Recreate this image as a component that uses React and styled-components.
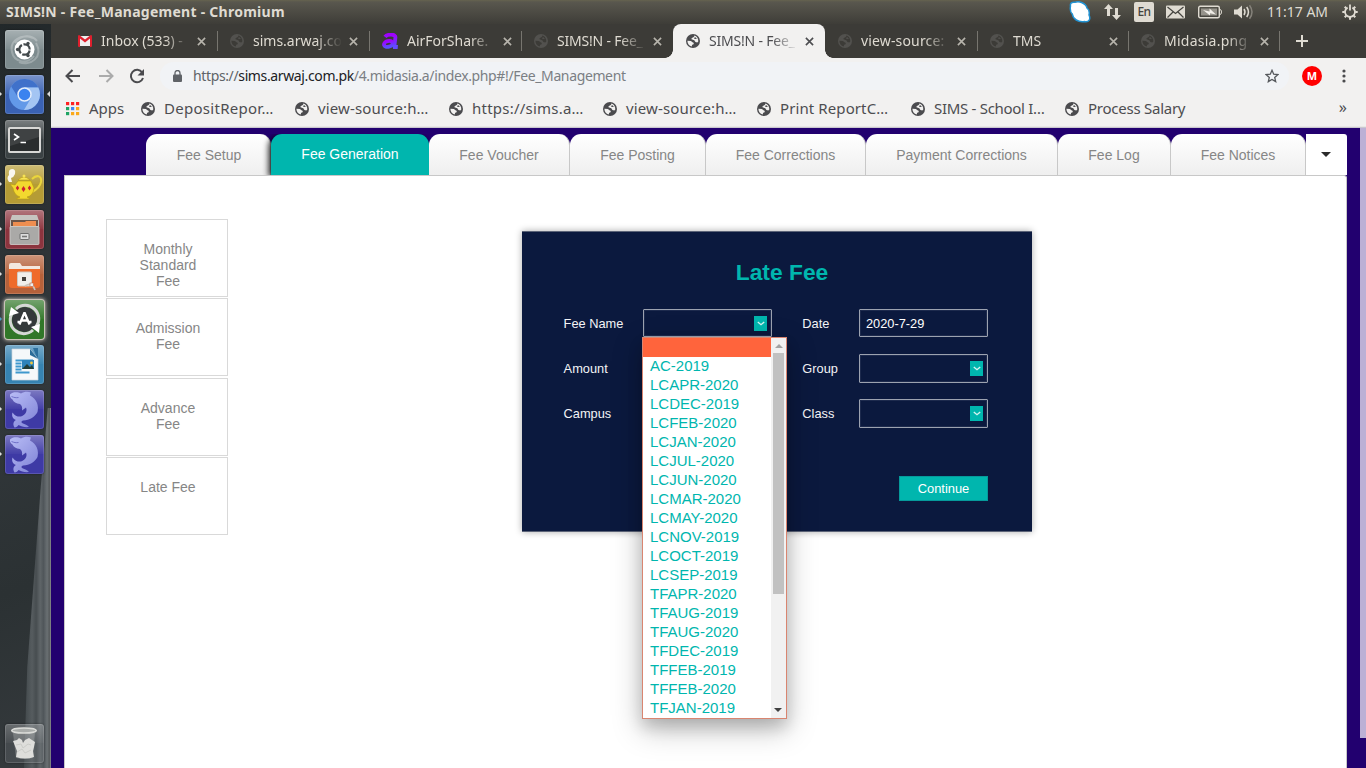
import React from "react";
import styled, { createGlobalStyle, css } from "styled-components";

const TEAL = "#00b6ae";

const GlobalStyle = createGlobalStyle`
  *, *::before, *::after { box-sizing: border-box; }
  html, body { margin: 0; padding: 0; overflow: hidden; }
  body { width: 1366px; height: 768px; font-family: "Liberation Sans", Arial, sans-serif; }
  svg { display: block; flex: none; }
`;

const uiFont = css`font-family: "Noto Sans", "Open Sans", sans-serif;`;

const Screen = styled.div`
  width: 1366px; height: 768px; overflow: hidden;
  display: flex; flex-direction: column;
`;
const TopBar = styled.header`
  ${uiFont}
  height: 24px; flex: none; display: flex; align-items: center; padding: 0 8px 0 6px;
  background: linear-gradient(#66634f 0, #59574e 2px, #3e3d38 100%);
  color: #dfdbd2;
`;
const WindowTitle = styled.div`
  font-size: 14px; font-weight: 700; letter-spacing: 0.26px; flex: 1; white-space: nowrap; padding-bottom: 1px;
`;
const Tray = styled.div`display: flex; align-items: center; height: 24px;`;
const TraySlot = styled.div`margin-right: ${(p) => p.$gap}px;`;
const Lang = styled.div`
  width: 20px; height: 20px; border-radius: 2px; background: #dfdbd2; color: #45443f;
  font-size: 12px; font-weight: 500; line-height: 20px; text-align: center; margin-right: 12px; letter-spacing: -0.5px;
`;
const Clock = styled.div`
  font-size: 14px; letter-spacing: 0; margin-right: 12px; width: 63px; white-space: nowrap; line-height: 24px;
`;
const Desktop = styled.div`display: flex; height: 744px;`;

const Launcher = styled.nav`
  width: 51px; flex: none; display: flex; flex-direction: column; align-items: center;
  padding: 5.5px 2px 5.5px 0; gap: 6px; position: relative;
  background: linear-gradient(160deg, #22282a 0, #33393c 45%, #2b3133 75%, #353a3d 100%);
  &::before {
    content: ""; position: absolute; right: 0; bottom: 0; width: 27px; height: 360px;
    clip-path: polygon(88% 0, 100% 0, 100% 100%, 0 100%, 12% 72%, 62% 22%);
    background: linear-gradient(90deg, #40474a, #565c5f 30%, #474d50 45%, #5f6568 60%, #50565a 72%, #6a7073 86%, #55595b 94%, #8b8f91 100%);
  }
`;
const Tile = styled.div`
  width: 39px; height: 39px; border-radius: 3px; position: relative; flex: none;
  margin-top: ${(p) => (p.$last ? "auto" : 0)};
  background: ${(p) => p.$bg};
  box-shadow: ${(p) => (p.$glow ? "0 0 0 1px #c9c3b8, 0 0 4px 1px #e7ded0" : "inset 0 0 0 1px rgba(255,255,255,.14), 0 0 2px rgba(0,0,0,.5)")};
  &::before {
    content: ""; position: absolute; inset: 0 0 50% 0; border-radius: 3px 3px 0 0;
    background: linear-gradient(rgba(255,255,255,${(p) => (p.$last ? 0.2 : 0.32)}), rgba(255,255,255,.03));
  }
  svg { position: relative; }
`;
const Arrow = styled.i`
  position: absolute; top: 16px; ${(p) => (p.$right ? "right: -6px" : "left: -6px")};
  border: 3.5px solid transparent; border-width: 3.5px 3px;
  ${(p) => (p.$right ? "border-right-color: #ddd; border-left: 0;" : `border-left-color: ${p.$color || "#ddd"}; border-right: 0;`)}
`;

const Browser = styled.main`flex: 1; display: flex; flex-direction: column; min-width: 0;`;
const TabStrip = styled.div`
  ${uiFont}
  height: 34px; flex: none; display: flex; background: #3c3b37; padding-left: 14px;
`;
const BrowserTab = styled.div`
  width: ${(p) => p.$w}px; height: 34px; flex: none; display: flex; align-items: center; padding-left: 13px;
  position: relative; color: ${(p) => (p.$active ? "#4d4d50" : "#dfdbd2")};
  border-radius: 8px 8px 0 0;
  background: ${(p) => (p.$active ? "#f2f1f0" : "transparent")};
  &::after {
    content: ""; display: ${(p) => (p.$line ? "block" : "none")}; width: 1px; height: 20px; background: #77756f;
    position: absolute; right: -1px; top: 7px;
  }
  ${(p) => p.$active && css`
    &::before {
      content: ""; position: absolute; left: -8px; right: -8px; bottom: 0; height: 8px;
      background:
        radial-gradient(circle at 0 0, transparent 7.5px, #f2f1f0 8px) 0 0 / 8px 8px no-repeat,
        radial-gradient(circle at 100% 0, transparent 7.5px, #f2f1f0 8px) 100% 0 / 8px 8px no-repeat;
    }
  `}
`;
const TabLabel = styled.span`
  margin-left: 9px; width: 89px; white-space: nowrap; font-size: 14px; line-height: 24px;
  letter-spacing: ${(p) => p.$ls || 0}px;
  mask-image: linear-gradient(90deg, #000 63px, transparent 89px);
`;
const CloseSlot = styled.span`margin-left: 7px;`;
const PlusSlot = styled.span`margin: 11px 0 0 17px;`;

const Toolbar = styled.div`
  ${uiFont}
  height: 36px; flex: none; display: flex; align-items: center; background: #f2f1f0; padding: 0 15px 0 14px;
`;
const NavIcon = styled.span`margin-right: ${(p) => p.$gap}px;`;
const AddressBar = styled.div`
  height: 28px; width: 1129px; flex: none; border-radius: 14px; background: #f1f3f6; margin-left: 9px;
  display: flex; align-items: center; padding: 0 10px 0 13px; color: #7b7f84; margin-right: 13px;
`;
const Url = styled.span`
  margin-left: 11px; flex: 1; font-size: 14px; letter-spacing: -0.37px; white-space: nowrap; padding-bottom: 2px;
  b { font-weight: 400; color: #202124; }
  i { font-style: normal; color: #5f6368; }
`;
const Avatar = styled.div`
  width: 20px; height: 20px; flex: none; border-radius: 50%; background: #f00; color: #fff;
  font: 700 11px/20px "Noto Sans", sans-serif; text-align: center; margin-right: 20px;
`;
const Bookmarks = styled.div`
  ${uiFont}
  height: 34px; flex: none; background: #f2f1f0; border-bottom: 1px solid #c9c7cf; box-shadow: 0 -1px 0 #e8e6e6 inset;
  display: flex; align-items: center; padding: 0 19px 4px 15px; color: #4d4d50; font-size: 15px;
`;
const Bookmark = styled.div`
  display: flex; align-items: center; width: ${(p) => p.$w}px; flex: none; white-space: nowrap;
  letter-spacing: ${(p) => p.$ls || 0}px; line-height: 22px;
  span { margin-left: 9px; padding-bottom: 2px; }
`;
const More = styled.div`margin-left: auto; font-size: 16px; line-height: 20px; padding-bottom: 3px;`;

const Page = styled.section`
  flex: 1; display: flex; justify-content: space-between; background: #22006f; min-height: 0; padding-left: 13px;
`;
const PageColumn = styled.div`width: 1283px; display: flex; flex-direction: column; padding-top: 6px;`;
const PageScroll = styled.div`width: 6px; height: 610px; background: #bcb0d5;`;

const FeeTabs = styled.div`display: flex; height: 41px; flex: none; padding-left: 82px;`;
const FeeTab = styled.div`
  width: ${(p) => p.$w}px; flex: none; height: 41px; border-radius: 11px 11px 0 0; text-align: center;
  border-right: 1px solid #c8c8c8; font-size: 14px; line-height: 42px; color: #868686; white-space: nowrap;
  background: linear-gradient(#fff, #efefef);
  &:first-child { padding-left: 2px; }
  ${(p) => p.$active && css`
    background: ${TEAL}; color: #fff; line-height: 40px; border-right: 0; position: relative;
    box-shadow: -2px 2px 6px rgba(0, 0, 0, 0.95);
    clip-path: inset(0 0 0 -10px);
  `}
`;
const MoreTabs = styled.div`
  width: 41px; background: #fff; border-radius: 0 3px 0 0; display: flex; align-items: center; justify-content: center;
  padding-right: 1px;
`;
const Caret = styled.i`border: 5px solid transparent; border-top-color: #2b2b2b; border-bottom: 0;`;
const Content = styled.div`
  flex: 1; background: #fff; border: 1px solid #c8c8c8; border-bottom: 0; border-radius: 0 3px 0 0;
  display: flex; align-items: flex-start; padding: 43px 0 0 41px;
`;
const SideMenu = styled.div`width: 122px; display: flex; flex-direction: column; gap: 1.4px;`;
const SideItem = styled.div`
  height: 78px; border: 1px solid #d9d9d9; padding: 21px 20px 0 22px; text-align: center;
  font-size: 14px; line-height: 16px; color: #868686;
`;

const Card = styled.div`
  width: 510px; height: 300.5px; margin: 12px 0 0 294px; background: #0b193e; padding: 27px 44px 0 41px;
  border-top: 1px solid #5c6478; border-bottom: 1px solid #5c6478;
  box-shadow: 0 0 7px rgba(0, 0, 0, 0.33);
`;
const CardTitle = styled.h1`
  margin: 0 0 23px 13px; font-size: 22.8px; line-height: 27px; text-align: center; color: ${TEAL};
`;
const FieldGrid = styled.div`
  display: grid; grid-template-columns: 80px 129px 30px 57px 129px; grid-auto-rows: 28px; row-gap: 17px; align-items: center;
`;
const Label = styled.label`
  font-size: 12.8px; color: #f3f4f6; grid-column: ${(p) => p.$col}; white-space: nowrap;
  padding-left: ${(p) => (p.$col === 1 ? 0.6 : 0.3)}px;
`;
const Field = styled.div`
  grid-column: ${(p) => p.$col}; height: ${(p) => (p.$tall ? 29 : 28)}px; border: 1px solid #9ca2b0; border-radius: 1px;
  margin-bottom: ${(p) => (p.$tall ? -1 : 0)}px;
  box-shadow: inset 0 0 0 1px rgba(156, 162, 176, 0.13);
  display: flex; align-items: center; justify-content: ${(p) => (p.$select ? "flex-end" : "flex-start")};
  padding: 0 4px 0 6px; color: #fff; font-size: 12.8px; position: relative;
`;
const Chevron = styled.span`
  width: 13px; height: 15px; background: ${TEAL}; display: flex; align-items: center; justify-content: center;
`;
const Continue = styled.button`
  display: block; margin: 49px 0 0 auto; width: 89px; height: 25px; border: 1px solid #069a9b; background: ${TEAL};
  color: #fff; font: 12.9px "Liberation Sans", sans-serif; padding: 0;
`;
const Dropdown = styled.div`
  position: absolute; z-index: 5; left: -2px; top: 27px; width: 145px; height: 382px; background: #fff;
  border: 1px solid #d98570; display: flex;
  box-shadow: 0 10px 28px rgba(0, 0, 0, 0.26), 0 8px 14px rgba(0, 0, 0, 0.14);
`;
const Options = styled.div`flex: 1;`;
const Option = styled.div`
  height: 19px; padding-left: 7px; font-size: 15px; line-height: 18px; color: ${TEAL}; white-space: nowrap;
  background: ${(p) => (p.$selected ? "#ff643c" : "transparent")};
`;
const ListScroll = styled.div`
  width: 15px; background: #f1f1f1; display: flex; flex-direction: column; align-items: center; padding: 6px 0 6px;
`;
const ListThumb = styled.div`width: 11px; height: 241px; background: #c1c1c1; margin: 5px 0 auto; flex: none;`;
const ScrollArrow = styled.i`
  border: 4px solid transparent; height: 0; margin-right: ${(p) => (p.$up ? 0 : 1)}px;
  ${(p) => (p.$up ? "border-bottom-color: #a3a3a3; border-top: 0;" : "border-top-color: #404040; border-bottom: 0;")}
`;

const Globe = ({ dim, light = "#f2f1f0" }) => (
  <svg width="14" height="14" viewBox="0 0 14 14">
    <circle cx="7" cy="7" r="7" fill={dim ? "#52514e" : "#4b4b4e"} />
    <path d="M8.3 1.4C8.5 3 7.2 3.2 6.3 3.7C5.3 4.3 5 5 6.1 5.5L8.3 6.2L9.4 8.1L11.3 8.6L12.3 7.5C12.5 4.5 11 2.2 8.3 1.4Z M1.4 6.8L4.9 7L6.5 8.2L7.9 9L7.3 10.4L6.1 10.8L5.8 12.5C3 11.9 1.4 9.7 1.4 6.8Z" fill={dim ? "#3c3b37" : light} />
    <path d="M9 3.1L11 4.7L9 5.1L8 4.5Z" fill={dim ? "#52514e" : "#4b4b4e"} />
  </svg>
);
const Gmail = () => (
  <svg width="14" height="12" viewBox="0 0 14 12">
    <path d="M1 1h12v10H1z" fill="#eee" />
    <path d="M0 1.2Q0 0 1.2 0L7 4.5 12.8 0Q14 0 14 1.2V11q0 1-1 1h-1V3.6L7 7.4 2 3.6V12H1q-1 0-1-1z" fill="#df1f2d" />
  </svg>
);
const AirLogo = () => (
  <svg width="16" height="16" viewBox="0 0 16 16">
    <defs><linearGradient id="air" x2="0" y2="1"><stop stopColor="#a100ff" /><stop offset="1" stopColor="#5b4dff" /></linearGradient></defs>
    <g fill="none" stroke="url(#air)">
      <path d="M3 3.800C5 1 14 .6 13.400 4.500L12.200 14.500" strokeWidth="3.800" />
      <ellipse cx="6.300" cy="10.900" rx="4.400" ry="2.900" strokeWidth="3.800" transform="rotate(-14 6.300 10.900)" />
    </g>
    <path d="M11 12h5l-.4 4H11z" fill="#654aff" />
  </svg>
);
const Close = ({ color = "#b7b4ac" }) => (
  <svg width="9" height="9" viewBox="0 0 9 9"><path d="M.9.9l7.2 7.2M8.1.9L.9 8.1" stroke={color} strokeWidth="1.6" /></svg>
);

const TrayIcons = () => (
  <Tray>
    <TraySlot $gap={13}>
      <svg width="22" height="22" viewBox="0 0 22 22">
        <path d="M1.500 5C.8 2 3 .8 6 1.300C10-.2 17 2 18 7C20.500 9 20.500 12 20 14C22 18 20 21.500 15.500 20.500C9 21.500 4 18 3.300 13C1 11 1 8 1.500 5Z" fill="#fff" stroke="#2292d2" strokeWidth="1.500" />
      </svg>
    </TraySlot>
    <TraySlot $gap={13}>
      <svg width="17" height="16" viewBox="0 0 17 16" fill="#dfdbd2">
        <path d="M4.500 0L9 5H6v7H3V5H0zM12.500 16L8 11h3V4h3v7h3z" />
      </svg>
    </TraySlot>
    <Lang>En</Lang>
    <TraySlot $gap={13}>
      <svg width="19" height="14" viewBox="0 0 19 14">
        <rect y=".5" width="19" height="13" rx="1" fill="#dfdbd2" />
        <path d="M1.500 2L9.500 8.500 17.500 2M1.500 12.500L7 7M17.500 12.500L12 7" fill="none" stroke="#45443f" strokeWidth="1.200" />
      </svg>
    </TraySlot>
    <TraySlot $gap={12}>
      <svg width="24" height="14" viewBox="0 0 24 14">
        <rect x=".7" y="1.200" width="20.600" height="11.600" rx="1.500" fill="none" stroke="#dfdbd2" strokeWidth="1.400" />
        <rect x="3" y="3.500" width="16" height="7" fill="#96938b" />
        <path d="M22 4.500q1.500 0 1.500 2.500T22 9.500" fill="none" stroke="#dfdbd2" />
        <path d="M5 5l6.500 1.500V3.500L18 9.500l-6-1.300v2.300z" fill="#f1eee8" />
      </svg>
    </TraySlot>
    <TraySlot $gap={13}>
      <svg width="20" height="16" viewBox="0 0 20 16">
        <path d="M0 5.500h3.500L8 1.500v13L3.500 10.500H0z" fill="#dfdbd2" />
        <path d="M10 5q2 3 0 6M12.700 3q3.500 5 0 10" fill="none" stroke="#dfdbd2" strokeWidth="1.500" />
        <path d="M15.500 1.200q5 6.800 0 13.600" fill="none" stroke="#85827a" strokeWidth="1.500" />
      </svg>
    </TraySlot>
    <Clock>11:17 AM</Clock>
    <svg width="16" height="16" viewBox="0 0 16 16" fill="none" stroke="#dfdbd2">
      <path d="M5.600 3.600a5 5 0 1 0 4.800 0M8 .5v6" strokeWidth="1.800" />
      <path d="M2.700 2.700l1.600 1.600M13.300 2.700l-1.600 1.600M.3 8h2.500M13.200 8h2.500M2.700 13.300l1.600-1.600M13.300 13.300l-1.600-1.600M8 13v2.800" strokeWidth="2" />
    </svg>
  </Tray>
);

const Ubuntu = () => (
  <svg width="39" height="39" viewBox="0 0 39 39">
    <g fill="none" stroke="#fff" strokeOpacity=".25" strokeWidth="2">
      <path d="M8 25C2 10 18 3 28 8M31 13c8 14-6 24-17 19M10 13C16 4 27 5 32 11M29 26C22 35 9 32 7 22" />
    </g>
    <circle cx="19.500" cy="19.500" r="10" fill="#fff" />
    <circle cx="19.500" cy="19.500" r="5.200" fill="none" stroke="#43494c" strokeWidth="2.200" strokeDasharray="9.300 1.600" strokeDashoffset="-1" />
    <circle cx="12.600" cy="19.500" r="1.700" fill="#43494c" /><circle cx="23" cy="13.500" r="1.700" fill="#43494c" /><circle cx="23" cy="25.500" r="1.700" fill="#43494c" />
  </svg>
);
const Chromium = () => (
  <svg width="39" height="39" viewBox="0 0 39 39">
    <circle cx="19.500" cy="19.500" r="15.500" fill="#6399e8" />
    <path d="M19.500 12.500H33.300A15.500 15.500 0 0 0 6.200 11.500L13.500 23z" fill="#4071ca" />
    <path d="M19.500 12.500H33.300A15.500 15.500 0 0 1 19 35L26 23z" fill="#a4c5f3" />
    <circle cx="19.500" cy="19.500" r="6.500" fill="#3b83ef" stroke="#e3edfb" strokeWidth="1.500" />
  </svg>
);
const Terminal = () => (
  <svg width="39" height="39" viewBox="0 0 39 39">
    <rect x="4" y="8" width="31" height="24" rx="1" fill="#2a2d2e" stroke="#d8d8d6" strokeWidth="2" />
    <path d="M5 9h29v8L5 26z" fill="#fff" opacity=".1" />
    <path d="M9 14l4.500 3L9 20M15.500 22.500h5.500" fill="none" stroke="#fff" strokeWidth="1.600" />
  </svg>
);
const Teapot = () => (
  <svg width="39" height="39" viewBox="0 0 39 39">
    <path d="M27 14C32 9 37 11 36 17C35 22 31 25 27 27" fill="none" stroke="#ead53c" strokeWidth="2" />
    <path d="M5 19l5 1 3-4h13l3 7q-1 8-7 9l3 2H11l4-2q-6-2-7-9z" fill="#f2d82f" stroke="#b89b13" strokeWidth=".6" />
    <path d="M13 15q6-6 12 0z" fill="#f7e354" stroke="#b89b13" strokeWidth=".6" /><circle cx="19" cy="11" r="1.500" fill="#f7e354" />
    <path d="M12.500 20.500l1.700 2.500-1.700 2.500-1.700-2.500zM18.500 21l2 3-2 3-2-3zM24.500 20.500l1.700 2.500-1.700 2.500-1.700-2.500z" fill="#cf2030" />
    <path d="M4 17q-3-4 0-7-1-6 3-6 4 0 3 5-1 3-4 4l1 4z" fill="#fff" opacity=".9" />
  </svg>
);
const Cabinet = () => (
  <svg width="39" height="39" viewBox="0 0 39 39">
    <path d="M7 5h25l2 6v23H5V11z" fill="#c6c4c0" /><path d="M6 10h27v6H6z" fill="#6b5448" />
    <path d="M8 12h12l1-1h10v6H8z" fill="#ef8e50" />
    <rect x="5" y="16.500" width="29" height="18" rx="1" fill="#aaa9a7" stroke="#d0cfcd" strokeWidth=".8" />
    <rect x="15" y="23.500" width="9" height="6" rx="1" fill="#ddd" stroke="#6e6e6e" /><path d="M17 26.500h5" stroke="#777" strokeWidth="1.600" />
  </svg>
);
const Folder = () => (
  <svg width="39" height="39" viewBox="0 0 39 39">
    <path d="M4 10q0-2 2-2h9l2 3h18v8H4z" fill="#f3e8df" />
    <path d="M4 14h31v16q0 3-3 3H7q-3 0-3-3z" fill="#ef6b2a" />
    <rect x="12.500" y="17" width="14" height="14" rx="1" fill="#f0eeea" stroke="#cfcac2" />
    <rect x="17" y="22" width="4" height="4" fill="#45413c" /><path d="M20 31q7-5 10 4" fill="none" stroke="#c8c4bc" strokeWidth="1.600" /><rect x="25" y="28" width="3.500" height="3.500" fill="#eee" stroke="#b5502a" strokeWidth=".5" />
  </svg>
);
const Updater = () => (
  <svg width="39" height="39" viewBox="0 0 39 39">
    <circle cx="19.500" cy="19.500" r="12.500" fill="#34393a" />
    <path d="M11 9A13.500 13.500 0 0 1 31 27M28 30A13.500 13.500 0 0 1 8 12" fill="none" stroke="#d5d7d5" strokeWidth="3" />
    <path d="M4 16l2-9 8 6zM35 24l-1 9-8-6z" fill="#fff" />
    <path d="M19.500 12.500l5 12M19.500 12.500l-5 12M16 20.500h7M12.500 22h3M23.500 22h3" stroke="#fff" strokeWidth="2.300" />
  </svg>
);
const Writer = () => (
  <svg width="39" height="39" viewBox="0 0 39 39">
    <path d="M28 3h5v12z" fill="#2d6f9c" />
    <path d="M7 4h18l8 10v21H7z" fill="#f5f8fa" stroke="#ccd6dc" strokeWidth=".7" /><path d="M25 4l8 10-8-4z" fill="#2c6d99" />
    <path d="M10.500 15.500H28M10.500 18.500h6M10.500 21.500h6M10.500 24.500h6M10.500 27.500h14" stroke="#3e98cd" strokeWidth="1.800" />
    <rect x="17" y="15" width="12" height="9" fill="#2d83bb" /><path d="M17 24l5-5 3 3 2-2 2 4z" fill="#233e38" /><circle cx="26.500" cy="18" r="1.400" fill="#f0c63c" />
  </svg>
);
const Dolphin = () => (
  <svg width="39" height="39" viewBox="0 0 39 39">
    <defs><linearGradient id="dol" x2=".8" y2="1"><stop stopColor="#b9bdf6" /><stop offset="1" stopColor="#8286d8" /></linearGradient></defs>
    <path d="M5 4.500C8 1.500 13 2 16 3.500C19 1.500 23 1.500 26 2.500L25 5.500C32 9 34 16 32.500 22C30 27 25 30 18 30.500C16.500 31 16 32 17 33C19 34 22 34.500 24 37C20 37.500 16 36.500 13.500 35C12.500 36.500 11.500 37.500 9.500 37.500C7.500 34 8.500 31.500 11 30C7.500 28.500 6.500 26 7.500 22.500C10 26 13 27 16 26.500C21 24.500 22.500 21 21 17.500L17 20.500C17.500 17.500 17 15.500 15 14C11 13.500 8.500 12 7.500 9.500C6 8.500 4.500 7 5 4.500Z" fill="url(#dol)" />
    <path d="M6.500 6.500C9 7.500 11 8 13.500 7.500" fill="none" stroke="#5f60bd" strokeWidth=".8" />
  </svg>
);
const Trash = () => (
  <svg width="39" height="39" viewBox="0 0 39 39">
    <path d="M8 9h22l-2.500 25q-8 2-16.500 0z" fill="#b5b8b7" opacity=".35" />
    <ellipse cx="19" cy="6.500" rx="12.300" ry="2.600" fill="#a9acaa" stroke="#dadbd8" strokeWidth="1.500" />
    <path d="M8 17l4-1 2-2 3 2 1 3 2-3 4-2 3 2 3 2-1 5-1 4 1 6q-9 3-18 0l1-6z" fill="#dededb" />
    <path d="M11 21l5-1 2 4 5-4 3 1M12 28l5-3 3 4 6-3" fill="none" stroke="#cbccc8" strokeWidth="1" />
  </svg>
);

const launcher = [
  { icon: Ubuntu, bg: "#7d8b8e" },
  { icon: Chromium, bg: "#3a62b4", left: true, right: true },
  { icon: Terminal, bg: "#3b4244" },
  { icon: Teapot, bg: "#b59c35", left: true },
  { icon: Cabinet, bg: "#8c343e", left: true },
  { icon: Folder, bg: "#b5613a", left: true },
  { icon: Updater, bg: "#317728", left: true, color: "#4f9fc5", glow: true },
  { icon: Writer, bg: "#3683b1", left: true },
  { icon: Dolphin, bg: "#3e3aa5", left: true },
  { icon: Dolphin, bg: "#3e3aa5", left: true },
  { icon: Trash, bg: "rgba(140,145,148,.2)", last: true },
];

const browserTabs = [
  { label: "Inbox (533) -", icon: <Gmail />, line: true, w: 152, ls: 0 },
  { label: "sims.arwaj.co", line: true, w: 152, ls: 0 },
  { label: "AirForShare.", icon: <AirLogo />, line: true, w: 152, ls: 0 },
  { label: "SIMS!N - Fee_", w: 152, ls: -0.2 },
  { label: "SIMS!N - Fee_", active: true, w: 152, ls: -0.2 },
  { label: "view-source:", line: true, w: 152, ls: 0.15 },
  { label: "TMS", line: true, w: 151, ls: 0 },
  { label: "Midasia.png", line: true, w: 151, ls: 0.25 },
];

const bookmarks = [
  ["DepositRepor…", 0.28], ["view-source:h…", 0.15], ["https://sims.a…", 0.23], ["view-source:h…", 0.15],
  ["Print ReportC…", 0.1], ["SIMS - School I…", -0.3], ["Process Salary", -0.25],
];

const feeTabs = [
  ["Fee Setup", 125], ["Fee Generation", 158], ["Fee Voucher", 141], ["Fee Posting", 136],
  ["Fee Corrections", 160], ["Payment Corrections", 192], ["Fee Log", 113], ["Fee Notices", 135],
];

const options = [
  "", "AC-2019", "LCAPR-2020", "LCDEC-2019", "LCFEB-2020", "LCJAN-2020", "LCJUL-2020", "LCJUN-2020", "LCMAR-2020",
  "LCMAY-2020", "LCNOV-2019", "LCOCT-2019", "LCSEP-2019", "TFAPR-2020", "TFAUG-2019", "TFAUG-2020", "TFDEC-2019",
  "TFFEB-2019", "TFFEB-2020", "TFJAN-2019",
];

const appColors = ["#f22", "#f22", "#f22", "#1fa463", "#4285f4", "#fba91a", "#1fa463", "#fba91a", "#fba91a"];

const SelectButton = () => (
  <Chevron>
    <svg width="8" height="5" viewBox="0 0 8 5"><path d="M.8 1L4 3.700 7.200 1" fill="none" stroke="#d4f3f1" strokeWidth="1.400" /></svg>
  </Chevron>
);

export default function App() {
  return (
    <Screen>
      <GlobalStyle />
      <TopBar>
        <WindowTitle>SIMS!N - Fee_Management - Chromium</WindowTitle>
        <TrayIcons />
      </TopBar>
      <Desktop>
        <Launcher>
          {launcher.map(({ icon: Icon, ...t }, i) => (
            <Tile key={i} $bg={t.bg} $glow={t.glow} $last={t.last}>
              <Icon />
              {t.left && <Arrow $color={t.color} />}
              {t.right && <Arrow $right />}
            </Tile>
          ))}
        </Launcher>
        <Browser>
          <TabStrip>
            {browserTabs.map((t, i) => (
              <BrowserTab key={i} $w={t.w} $active={t.active} $line={t.line}>
                {t.icon || <Globe dim={!t.active} />}
                <TabLabel $ls={t.ls}>{t.label}</TabLabel>
                <CloseSlot><Close color={t.active ? "#4d4d50" : undefined} /></CloseSlot>
              </BrowserTab>
            ))}
            <PlusSlot>
              <svg width="12" height="12" viewBox="0 0 12 12"><path d="M6 0v12M0 6h12" stroke="#dfdbd2" strokeWidth="2" /></svg>
            </PlusSlot>
          </TabStrip>
          <Toolbar>
            <NavIcon $gap={17}>
              <svg width="16" height="14" viewBox="0 0 16 14"><path d="M15 7H2M7.500 1l-6 6 6 6" fill="none" stroke="#4b4b4e" strokeWidth="2" /></svg>
            </NavIcon>
            <NavIcon $gap={15}>
              <svg width="16" height="14" viewBox="0 0 16 14"><path d="M1 7h13M8.500 1l6 6-6 6" fill="none" stroke="#ababab" strokeWidth="2" /></svg>
            </NavIcon>
            <NavIcon $gap={6}>
              <svg width="16" height="16" viewBox="0 0 16 16"><path d="M13.200 4.500A6.200 6.200 0 1 0 14 10" fill="none" stroke="#4b4b4e" strokeWidth="2" /><path d="M15 1v6.500H8.500z" fill="#4b4b4e" /></svg>
            </NavIcon>
            <AddressBar>
              <svg width="9" height="12" viewBox="0 0 9 12"><rect y="4.500" width="9" height="7.500" rx="1" fill="#5f6368" /><path d="M2 5V3a2.500 2.500 0 0 1 5 0v2" fill="none" stroke="#5f6368" strokeWidth="1.300" /></svg>
              <Url><i>https://</i><b>sims.arwaj.com.pk</b>/4.midasia.a/index.php#!/Fee_Management</Url>
              <svg width="14" height="14" viewBox="0 0 14 14"><path d="M7 1.300l1.700 3.900 4.200.4-3.200 2.800 1 4.200L7 10.400l-3.700 2.200 1-4.200L1.100 5.600l4.200-.4z" fill="none" stroke="#55585c" strokeWidth="1.300" /></svg>
            </AddressBar>
            <Avatar>M</Avatar>
            <svg width="4" height="14" viewBox="0 0 4 14" fill="#4b4b4e"><circle cx="2" cy="2" r="1.600" /><circle cx="2" cy="7" r="1.600" /><circle cx="2" cy="12" r="1.600" /></svg>
          </Toolbar>
          <Bookmarks>
            <Bookmark $w={75} $ls={0}>
              <svg width="14" height="14" viewBox="0 0 14 14">
                {appColors.map((c, i) => <rect key={i} x={(i % 3) * 5} y={Math.floor(i / 3) * 5} width="3.200" height="3.200" fill={c} />)}
              </svg>
              <span>Apps</span>
            </Bookmark>
            {bookmarks.map(([label, ls], i) => (
              <Bookmark key={i} $w={154} $ls={ls}><Globe /><span>{label}</span></Bookmark>
            ))}
            <More>»</More>
          </Bookmarks>
          <Page>
            <PageColumn>
              <FeeTabs>
                {feeTabs.map(([label, w], i) => <FeeTab key={label} $w={w} $active={i === 1}>{label}</FeeTab>)}
                <MoreTabs><Caret /></MoreTabs>
              </FeeTabs>
              <Content>
                <SideMenu>
                  {["Monthly Standard Fee", "Admission Fee", "Advance Fee", "Late Fee"].map((s) => <SideItem key={s}>{s}</SideItem>)}
                </SideMenu>
                <Card>
                  <CardTitle>Late Fee</CardTitle>
                  <FieldGrid>
                    <Label $col={1}>Fee Name</Label>
                    <Field $col={2} $select>
                      <SelectButton />
                      <Dropdown>
                        <Options>
                          {options.map((o, i) => <Option key={i} $selected={i === 0}>{o}</Option>)}
                        </Options>
                        <ListScroll><ScrollArrow $up /><ListThumb /><ScrollArrow /></ListScroll>
                      </Dropdown>
                    </Field>
                    <Label $col={4}>Date</Label>
                    <Field $col={5}>2020-7-29</Field>
                    <Label $col={1}>Amount</Label>
                    <Label $col={4}>Group</Label>
                    <Field $col={5} $select $tall><SelectButton /></Field>
                    <Label $col={1}>Campus</Label>
                    <Label $col={4}>Class</Label>
                    <Field $col={5} $select $tall><SelectButton /></Field>
                  </FieldGrid>
                  <Continue>Continue</Continue>
                </Card>
              </Content>
            </PageColumn>
            <PageScroll />
          </Page>
        </Browser>
      </Desktop>
    </Screen>
  );
}
